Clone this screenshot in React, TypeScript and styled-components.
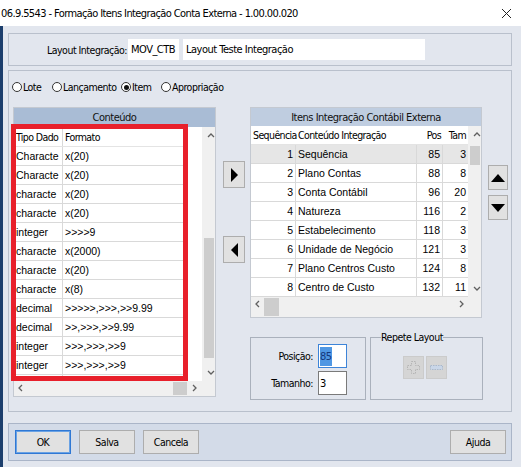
import React from "react";
import styled, { createGlobalStyle } from "styled-components";

const narrow = `"DejaVu Sans Condensed", "Liberation Sans", Arial, sans-serif`;
const regular = `"Liberation Sans", Arial, sans-serif`;

const GlobalStyle = createGlobalStyle`
  html, body {
    margin: 0;
    padding: 0;
  }

  body {
    width: 521px;
    height: 467px;
    overflow: hidden;
    background: #e2e6ee;
    font-family: ${narrow};
    font-size: 10.5px;
    letter-spacing: -0.5px;
    color: #000;
  }

  * {
    box-sizing: border-box;
  }
`;

const Window = styled.div`
  width: 521px;
  height: 467px;
  display: flex;
  flex-direction: column;
  background: #e2e6ee;
`;

const TitleBar = styled.div`
  height: 26px;
  flex: none;
  background: #fff;
  display: flex;
  align-items: center;
  padding: 0 10px 0 1px;
  font-size: 11px;
  letter-spacing: -0.6px;

  .title {
    flex: 1;
    white-space: nowrap;
  }
`;

const Body = styled.div`
  flex: 1;
  border-left: 3px solid #1c3e6c;
  padding: 7px 9px 0 5px;
  display: flex;
  flex-direction: column;
`;

const HeaderBox = styled.div`
  height: 33px;
  flex: none;
  border: 1px solid #b9c0cc;
  display: flex;
  align-items: center;
`;

const FieldLabel = styled.span<{ $w: number; $pad?: number }>`
  width: ${(p) => p.$w}px;
  flex: none;
  text-align: right;
  padding-right: ${(p) => p.$pad ?? 1}px;
  white-space: nowrap;
`;

const TextBox = styled.div<{ $w: number }>`
  width: ${(p) => p.$w}px;
  height: 21px;
  flex: none;
  background: #fff;
  margin-right: 4px;
  padding: 0 3px;
  display: flex;
  align-items: center;
  font-size: 11px;
  white-space: nowrap;
`;

const MainPanel = styled.div`
  margin-top: 4px;
  height: 342px;
  flex: none;
  border: 1px solid #b9c0cc;
  padding: 6px 0 0 4px;
`;

const RadioRow = styled.div`
  height: 20px;
  margin-left: -1px;
  display: flex;
  align-items: center;
`;

const RadioItem = styled.label<{ $w: number }>`
  width: ${(p) => p.$w}px;
  flex: none;
  display: flex;
  align-items: center;
  white-space: nowrap;
`;

const RadioDot = styled.span<{ $on?: boolean }>`
  width: 10px;
  height: 10px;
  border: 1px solid #333;
  border-radius: 50%;
  background: #fff;
  margin-right: 1px;
  display: flex;
  align-items: center;
  justify-content: center;

  &::after {
    content: "";
    width: 5px;
    height: 5px;
    border-radius: 50%;
    background: ${(p) => (p.$on ? "#111" : "transparent")};
  }
`;

const ContentRow = styled.div`
  margin-top: 10px;
  display: flex;
  align-items: flex-start;
`;

const GridPanel = styled.div<{ $w: number; $h: number }>`
  position: relative;
  width: ${(p) => p.$w}px;
  height: ${(p) => p.$h}px;
  flex: none;
  border: 1px solid #c4c9d1;
  background: #f0f0f0;
  display: flex;
  flex-direction: column;
`;

const PanelHeader = styled.div<{ $bg: string; $h: number }>`
  height: ${(p) => p.$h}px;
  flex: none;
  background: ${(p) => p.$bg};
  display: flex;
  align-items: center;
  justify-content: center;
  font-size: 11px;
  color: #111;
`;

const TableArea = styled.div<{ $h: number }>`
  height: ${(p) => p.$h}px;
  flex: none;
  display: flex;
`;

const Grid = styled.div<{ $w: number }>`
  width: ${(p) => p.$w}px;
  flex: none;
  background: #fff;
  overflow: hidden;
`;

const HeadRow = styled.div<{ $h: number; $w: number }>`
  width: ${(p) => p.$w}px;
  height: ${(p) => p.$h}px;
  display: flex;
  border-bottom: 1px solid #e4e4e4;
`;

const Row = styled.div<{ $w: number; $sel?: boolean }>`
  width: ${(p) => p.$w}px;
  height: 19px;
  display: flex;
  border-bottom: 1px solid #d9d9d9;
  background: ${(p) => (p.$sel ? "#e6e6e6" : "#fff")};
`;

const Cell = styled.div<{ $w?: number; $right?: boolean; $line?: boolean; $head?: boolean }>`
  width: ${(p) => (p.$w ? `${p.$w}px` : "auto")};
  flex: ${(p) => (p.$w ? "none" : "1")};
  display: flex;
  align-items: center;
  justify-content: ${(p) => (p.$right ? "flex-end" : "flex-start")};
  padding: 0 ${(p) => (p.$right ? "2px" : "0")} 0 ${(p) => (p.$right ? "0" : "2px")};
  border-right: ${(p) => (p.$line ? "1px solid #d9d9d9" : "none")};
  white-space: nowrap;
  overflow: ${(p) => (p.$head ? "visible" : "hidden")};
  font-family: ${(p) => (p.$head ? narrow : regular)};
  font-size: 10.5px;
  letter-spacing: ${(p) => (p.$head ? "-0.6px" : "0")};
`;

const VScroll = styled.div`
  width: 13px;
  flex: none;
  background: #f0f0f0;
  display: flex;
  flex-direction: column;
`;

const ScrollCap = styled.div<{ $size: number }>`
  height: ${(p) => p.$size}px;
  min-width: ${(p) => p.$size}px;
  flex: none;
  display: flex;
  align-items: center;
  justify-content: center;
`;

const VTrack = styled.div`
  flex: 1;
  display: flex;
  flex-direction: column;
  align-items: center;
`;

const VThumb = styled.div<{ $top: number; $h: number }>`
  margin-top: ${(p) => p.$top}px;
  width: 10px;
  height: ${(p) => p.$h}px;
  background: #cdcdcd;
`;

const HScrollRow = styled.div<{ $h: number }>`
  height: ${(p) => p.$h}px;
  flex: none;
  display: flex;
`;

const HScroll = styled.div<{ $w: number }>`
  width: ${(p) => p.$w}px;
  flex: none;
  display: flex;
  background: #f0f0f0;
`;

const HTrack = styled.div`
  flex: 1;
  display: flex;
  align-items: stretch;
  padding: 1px 0;
`;

const HThumb = styled.div<{ $left: number; $w: number }>`
  margin-left: ${(p) => p.$left}px;
  width: ${(p) => p.$w}px;
  background: #cdcdcd;
`;

const Corner = styled.div`
  flex: 1;
  background: #f0f0f0;
`;

const Highlight = styled.div`
  position: absolute;
  left: -3px;
  top: 16px;
  width: 177px;
  height: 257px;
  border: 5px solid #e8202b;
  pointer-events: none;
`;

const ArrowColumn = styled.div`
  width: 22px;
  flex: none;
  margin: 0 5px 0 7px;
  padding-top: 54px;
  display: flex;
  flex-direction: column;
  gap: 48px;
`;

const MoveColumn = styled.div`
  width: 20px;
  flex: none;
  margin-left: 5px;
  padding-top: 58px;
  display: flex;
  flex-direction: column;
  gap: 5px;
`;

const IconButton = styled.div<{ $w: number; $h: number; $disabled?: boolean }>`
  width: ${(p) => p.$w}px;
  height: ${(p) => p.$h}px;
  background: ${(p) => (p.$disabled ? "#d5d5d5" : "#e1e1e1")};
  border: 1px solid ${(p) => (p.$disabled ? "#cbcbcb" : "#adadad")};
  display: flex;
  align-items: center;
  justify-content: center;
`;

const RightColumn = styled.div`
  width: 233px;
  flex: none;
  display: flex;
  flex-direction: column;
`;

const BoxRow = styled.div`
  margin-top: 19px;
  height: 63px;
  display: flex;
  gap: 4px;
`;

const PosBox = styled.div`
  width: 116px;
  flex: none;
  border: 1px solid #aab1bc;
  padding-top: 6px;
  display: flex;
  flex-direction: column;
  gap: 3px;
`;

const PosRow = styled.div`
  display: flex;
  align-items: center;
`;

const SmallInput = styled.div<{ $focus?: boolean }>`
  width: 29px;
  height: 24px;
  background: #fff;
  border: 1px solid ${(p) => (p.$focus ? "#3d84d8" : "#7a7a7a")};
  padding: 0 1px;
  display: flex;
  align-items: center;
  font-size: 11px;

  .sel {
    background: #4f97e3;
    color: #14387c;
    padding: 3px 0;
  }
`;

const RepeatBox = styled.fieldset`
  width: 113px;
  height: 69px;
  flex: none;
  margin: -6px 0 0;
  padding: 0;
  border: 1px solid #aab1bc;

  legend {
    margin-left: 10px;
    padding: 0;
  }
`;

const RepeatButtons = styled.div`
  margin: 13px 0 0 32px;
  display: flex;
  gap: 2px;
`;

const ButtonBar = styled.div`
  margin-top: 11px;
  height: 38px;
  flex: none;
  background: #d3dbe8;
  border: 1px solid #aab5c8;
  padding: 6px 5px 0 6px;
  display: flex;
  gap: 8px;
`;

const Button = styled.button<{ $focus?: boolean; $push?: boolean }>`
  width: 56px;
  height: 24px;
  margin-left: ${(p) => (p.$push ? "auto" : "0")};
  background: #e1e1e1;
  border: 1px solid ${(p) => (p.$focus ? "#2f78d4" : "#adadad")};
  box-shadow: ${(p) => (p.$focus ? "inset 0 0 0 1px #6aa2e4" : "none")};
  font-family: ${narrow};
  font-size: 10.5px;
  letter-spacing: -0.5px;
  color: #000;
  padding: 0;
`;

const Chevron: React.FC<{ dir: "up" | "down" | "left" | "right" }> = ({ dir }) => {
  const paths = {
    up: "M1 5 L4 2 L7 5",
    down: "M1 2 L4 5 L7 2",
    left: "M5 1 L2 4 L5 7",
    right: "M2 1 L5 4 L2 7",
  };
  return (
    <svg width="8" height="8" viewBox="0 0 8 8">
      <path d={paths[dir]} fill="none" stroke="#606060" strokeWidth="1.3" />
    </svg>
  );
};

const Triangle: React.FC<{ dir: "up" | "down" | "left" | "right" }> = ({ dir }) => {
  const pts = {
    right: "0,0 7,7 0,14",
    left: "7,0 0,7 7,14",
    up: "0,8 7,0 14,8",
    down: "0,0 14,0 7,8",
  };
  const vertical = dir === "up" || dir === "down";
  return (
    <svg width={vertical ? 14 : 7} height={vertical ? 8 : 14}>
      <polygon points={pts[dir]} fill="#000" />
    </svg>
  );
};

const contentRows = [
  ["Characte", "x(20)"],
  ["Characte", "x(20)"],
  ["characte", "x(20)"],
  ["characte", "x(20)"],
  ["integer", ">>>>9"],
  ["characte", "x(2000)"],
  ["characte", "x(20)"],
  ["characte", "x(8)"],
  ["decimal", ">>>>>,>>>,>>9.99"],
  ["decimal", ">>,>>>,>>9.99"],
  ["integer", ">>>,>>>,>>9"],
  ["integer", ">>>,>>>,>>9"],
  ["", ""],
];

const itemRows = [
  [1, "Sequência", 85, 3],
  [2, "Plano Contas", 88, 8],
  [3, "Conta Contábil", 96, 20],
  [4, "Natureza", 116, 2],
  [5, "Estabelecimento", 118, 3],
  [6, "Unidade de Negócio", 121, 3],
  [7, "Plano Centros Custo", 124, 8],
  [8, "Centro de Custo", 132, 11],
];

const App: React.FC = () => {
  return (
    <>
      <GlobalStyle />
      <Window>
        <TitleBar>
          <span className="title">
            06.9.5543 - Formação Itens Integração Conta Externa - 1.00.00.020
          </span>
          <svg width="9" height="9" viewBox="0 0 9 9">
            <path d="M0 0 L9 9 M9 0 L0 9" stroke="#222" strokeWidth="1" />
          </svg>
        </TitleBar>

        <Body>
          <HeaderBox>
            <FieldLabel $w={119}>Layout Integração:</FieldLabel>
            <TextBox $w={51}>MOV_CTB</TextBox>
            <TextBox $w={242}>Layout Teste Integração</TextBox>
          </HeaderBox>

          <MainPanel>
            <RadioRow>
              <RadioItem $w={40}>
                <RadioDot />
                Lote
              </RadioItem>
              <RadioItem $w={69}>
                <RadioDot />
                Lançamento
              </RadioItem>
              <RadioItem $w={40}>
                <RadioDot $on />
                Item
              </RadioItem>
              <RadioItem $w={70}>
                <RadioDot />
                Apropriação
              </RadioItem>
            </RadioRow>

            <ContentRow>
              <GridPanel $w={203} $h={290}>
                <PanelHeader $bg="#a9bcd5" $h={19}>
                  Conteúdo
                </PanelHeader>
                <TableArea $h={254}>
                  <Grid $w={188}>
                    <HeadRow $h={20} $w={172}>
                      <Cell $w={49} $line $head>
                        Tipo Dado
                      </Cell>
                      <Cell $head>Formato</Cell>
                    </HeadRow>
                    {contentRows.map(([tipo, formato], i) => (
                      <Row key={i} $w={172}>
                        <Cell $w={49} $line>
                          {tipo}
                        </Cell>
                        <Cell>{formato}</Cell>
                      </Row>
                    ))}
                  </Grid>
                  <VScroll>
                    <ScrollCap $size={17}>
                      <Chevron dir="up" />
                    </ScrollCap>
                    <VTrack>
                      <VThumb $top={94} $h={120} />
                    </VTrack>
                    <ScrollCap $size={17}>
                      <Chevron dir="down" />
                    </ScrollCap>
                  </VScroll>
                </TableArea>
                <HScrollRow $h={15}>
                  <HScroll $w={188}>
                    <ScrollCap $size={14}>
                      <Chevron dir="left" />
                    </ScrollCap>
                    <HTrack>
                      <HThumb $left={145} $w={14} />
                    </HTrack>
                    <ScrollCap $size={14}>
                      <Chevron dir="right" />
                    </ScrollCap>
                  </HScroll>
                  <Corner />
                </HScrollRow>
                <Highlight />
              </GridPanel>

              <ArrowColumn>
                <IconButton $w={22} $h={27}>
                  <Triangle dir="right" />
                </IconButton>
                <IconButton $w={22} $h={27}>
                  <Triangle dir="left" />
                </IconButton>
              </ArrowColumn>

              <RightColumn>
                <GridPanel $w={232} $h={211}>
                  <PanelHeader $bg="#bfcde0" $h={18}>
                    Itens Integração Contábil Externa
                  </PanelHeader>
                  <TableArea $h={171}>
                    <Grid $w={217}>
                      <HeadRow $h={19} $w={217}>
                        <Cell $w={45} $head>
                          Sequência
                        </Cell>
                        <Cell $w={121} $head>
                          Conteúdo Integração
                        </Cell>
                        <Cell $w={26} $head $right>
                          Pos
                        </Cell>
                        <Cell $w={25} $head $right>
                          Tam
                        </Cell>
                      </HeadRow>
                      {itemRows.map(([seq, name, pos, tam], i) => (
                        <Row key={i} $w={217} $sel={i === 0}>
                          <Cell $w={45} $right $line>
                            {seq}
                          </Cell>
                          <Cell $w={121} $line>
                            {name}
                          </Cell>
                          <Cell $w={26} $right $line>
                            {pos}
                          </Cell>
                          <Cell $w={25} $right>
                            {tam}
                          </Cell>
                        </Row>
                      ))}
                    </Grid>
                    <VScroll>
                      <ScrollCap $size={17}>
                        <Chevron dir="up" />
                      </ScrollCap>
                      <VTrack>
                        <VThumb $top={3} $h={19} />
                      </VTrack>
                      <ScrollCap $size={17}>
                        <Chevron dir="down" />
                      </ScrollCap>
                    </VScroll>
                  </TableArea>
                  <HScrollRow $h={20}>
                    <HScroll $w={217}>
                      <ScrollCap $size={13}>
                        <Chevron dir="left" />
                      </ScrollCap>
                      <HTrack>
                        <HThumb $left={0} $w={15} />
                      </HTrack>
                      <ScrollCap $size={13}>
                        <Chevron dir="right" />
                      </ScrollCap>
                    </HScroll>
                    <Corner />
                  </HScrollRow>
                </GridPanel>

                <BoxRow>
                  <PosBox>
                    <PosRow>
                      <FieldLabel $w={67} $pad={5}>
                        Posição:
                      </FieldLabel>
                      <SmallInput $focus>
                        <span className="sel">85</span>
                      </SmallInput>
                    </PosRow>
                    <PosRow>
                      <FieldLabel $w={67} $pad={5}>
                        Tamanho:
                      </FieldLabel>
                      <SmallInput>3</SmallInput>
                    </PosRow>
                  </PosBox>

                  <RepeatBox>
                    <legend>Repete Layout</legend>
                    <RepeatButtons>
                      <IconButton $w={21} $h={23} $disabled>
                        <svg width="13" height="13" viewBox="0 0 13 13">
                          <path
                            d="M4.5 0.5 H8.5 V4.5 H12.5 V8.5 H8.5 V12.5 H4.5 V8.5 H0.5 V4.5 H4.5 Z"
                            fill="none"
                            stroke="#b5b5b5"
                            strokeDasharray="1.5 1"
                          />
                        </svg>
                      </IconButton>
                      <IconButton $w={21} $h={23} $disabled>
                        <svg width="13" height="5" viewBox="0 0 13 5">
                          <rect
                            x="0.5"
                            y="0.5"
                            width="12"
                            height="4"
                            fill="#c9d6e8"
                            stroke="#a9b8cc"
                            strokeDasharray="1.5 1"
                          />
                        </svg>
                      </IconButton>
                    </RepeatButtons>
                  </RepeatBox>
                </BoxRow>
              </RightColumn>

              <MoveColumn>
                <IconButton $w={20} $h={25}>
                  <Triangle dir="up" />
                </IconButton>
                <IconButton $w={20} $h={25}>
                  <Triangle dir="down" />
                </IconButton>
              </MoveColumn>
            </ContentRow>
          </MainPanel>

          <ButtonBar>
            <Button $focus>OK</Button>
            <Button>Salva</Button>
            <Button>Cancela</Button>
            <Button $push>Ajuda</Button>
          </ButtonBar>
        </Body>
      </Window>
    </>
  );
};

export default App;
